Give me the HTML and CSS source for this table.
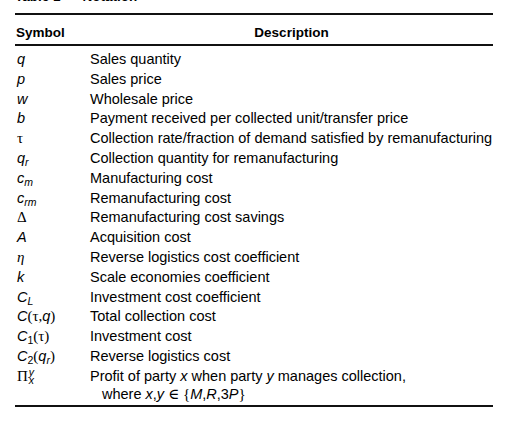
FILE: index.html
```html
<!DOCTYPE html>
<html lang="en">
<head>
  <title>Table 1 Notation</title>
  <link rel="stylesheet" href="styles.css">
</head>
<body>
  <div class="page">
    <p class="caption"><b>Table 1</b><b class="caption-title">Notation</b></p>

    <table class="notation">
      <thead>
        <tr>
          <th class="sym">Symbol</th>
          <th class="desc">Description</th>
        </tr>
      </thead>
      <tbody>
        <tr><td class="sym"><i>q</i></td><td>Sales quantity</td></tr>
        <tr><td class="sym"><i>p</i></td><td>Sales price</td></tr>
        <tr><td class="sym"><i>w</i></td><td>Wholesale price</td></tr>
        <tr><td class="sym"><i>b</i></td><td>Payment received per collected unit/transfer price</td></tr>
        <tr><td class="sym"><span class="gr">τ</span></td><td>Collection rate/fraction of demand satisfied by remanufacturing</td></tr>
        <tr><td class="sym"><i>q<sub>r</sub></i></td><td>Collection quantity for remanufacturing</td></tr>
        <tr><td class="sym"><i>c<sub>m</sub></i></td><td>Manufacturing cost</td></tr>
        <tr><td class="sym"><i>c<sub>rm</sub></i></td><td>Remanufacturing cost</td></tr>
        <tr><td class="sym"><span class="gr">Δ</span></td><td>Remanufacturing cost savings</td></tr>
        <tr><td class="sym"><i>A</i></td><td>Acquisition cost</td></tr>
        <tr><td class="sym"><span class="gr gi">η</span></td><td>Reverse logistics cost coefficient</td></tr>
        <tr><td class="sym"><i>k</i></td><td>Scale economies coefficient</td></tr>
        <tr><td class="sym"><i>C<sub>L</sub></i></td><td>Investment cost coefficient</td></tr>
        <tr><td class="sym"><i>C</i><span class="gr">(τ,</span><i>q</i><span class="gr">)</span></td><td>Total collection cost</td></tr>
        <tr><td class="sym"><i>C</i><sub>1</sub><span class="gr">(τ)</span></td><td>Investment cost</td></tr>
        <tr><td class="sym"><i>C</i><sub>2</sub><span class="gr">(</span><i>q<sub>r</sub></i><span class="gr">)</span></td><td>Reverse logistics cost</td></tr>
        <tr class="last">
          <td class="sym"><span class="gr">Π</span><span class="supsub"><i>y</i><i>x</i></span></td>
          <td>Profit of party <i>x</i> when party <i>y</i> manages collection,
            <div class="cont">where <i>x</i>,<i>y</i> <span class="gr">∈ {</span><i>M</i>,<i>R</i>,3<i>P</i><span class="gr">}</span></div></td>
        </tr>
      </tbody>
    </table>
  </div>
</body>
</html>
```

FILE: styles.css
```css
body {
  margin: 0;
  background: #fff;
  color: #000;
  font-family: "Liberation Sans", Arial, sans-serif;
  overflow: hidden;
}

.page {
  padding-left: 15px;
  width: 478px;
}

.caption {
  margin: -11px 0 0 0;
  height: 24px;
  font-size: 13.5px;
  line-height: 16px;
}

.caption-title {
  margin-left: 22px;
}

.notation {
  width: 478px;
  border-collapse: collapse;
  font-size: 14.5px;
  border-top: 2px solid #111;
  border-bottom: 2px solid #111;
}

.notation th {
  padding: 10px 0 4px;
  font-size: 13.5px;
  line-height: 15px;
  font-weight: bold;
  border-bottom: 2px solid #111;
}

.notation th.sym {
  text-align: left;
  padding-left: 1px;
}

.notation td {
  padding: 0;
  line-height: 19.8px;
  vertical-align: top;
}

.notation td.sym {
  width: 73px;
  padding-left: 2px;
}

.notation tbody tr:first-child td {
  padding-top: 4px;
}

.notation tr.last td {
  padding-bottom: 3.4px;
}

.cont {
  line-height: 14.8px;
  padding-left: 12px;
}

.gr {
  font-family: "Liberation Serif", "DejaVu Serif", serif;
  font-style: normal;
  font-size: 15px;
}

.gi {
  font-style: italic;
}

sub {
  font-size: 10.5px;
  vertical-align: -3px;
  line-height: 0;
}

.supsub {
  display: inline-flex;
  flex-direction: column;
  vertical-align: 5px;
  margin-left: 1px;
  font-size: 10.5px;
  line-height: 8px;
}
```
